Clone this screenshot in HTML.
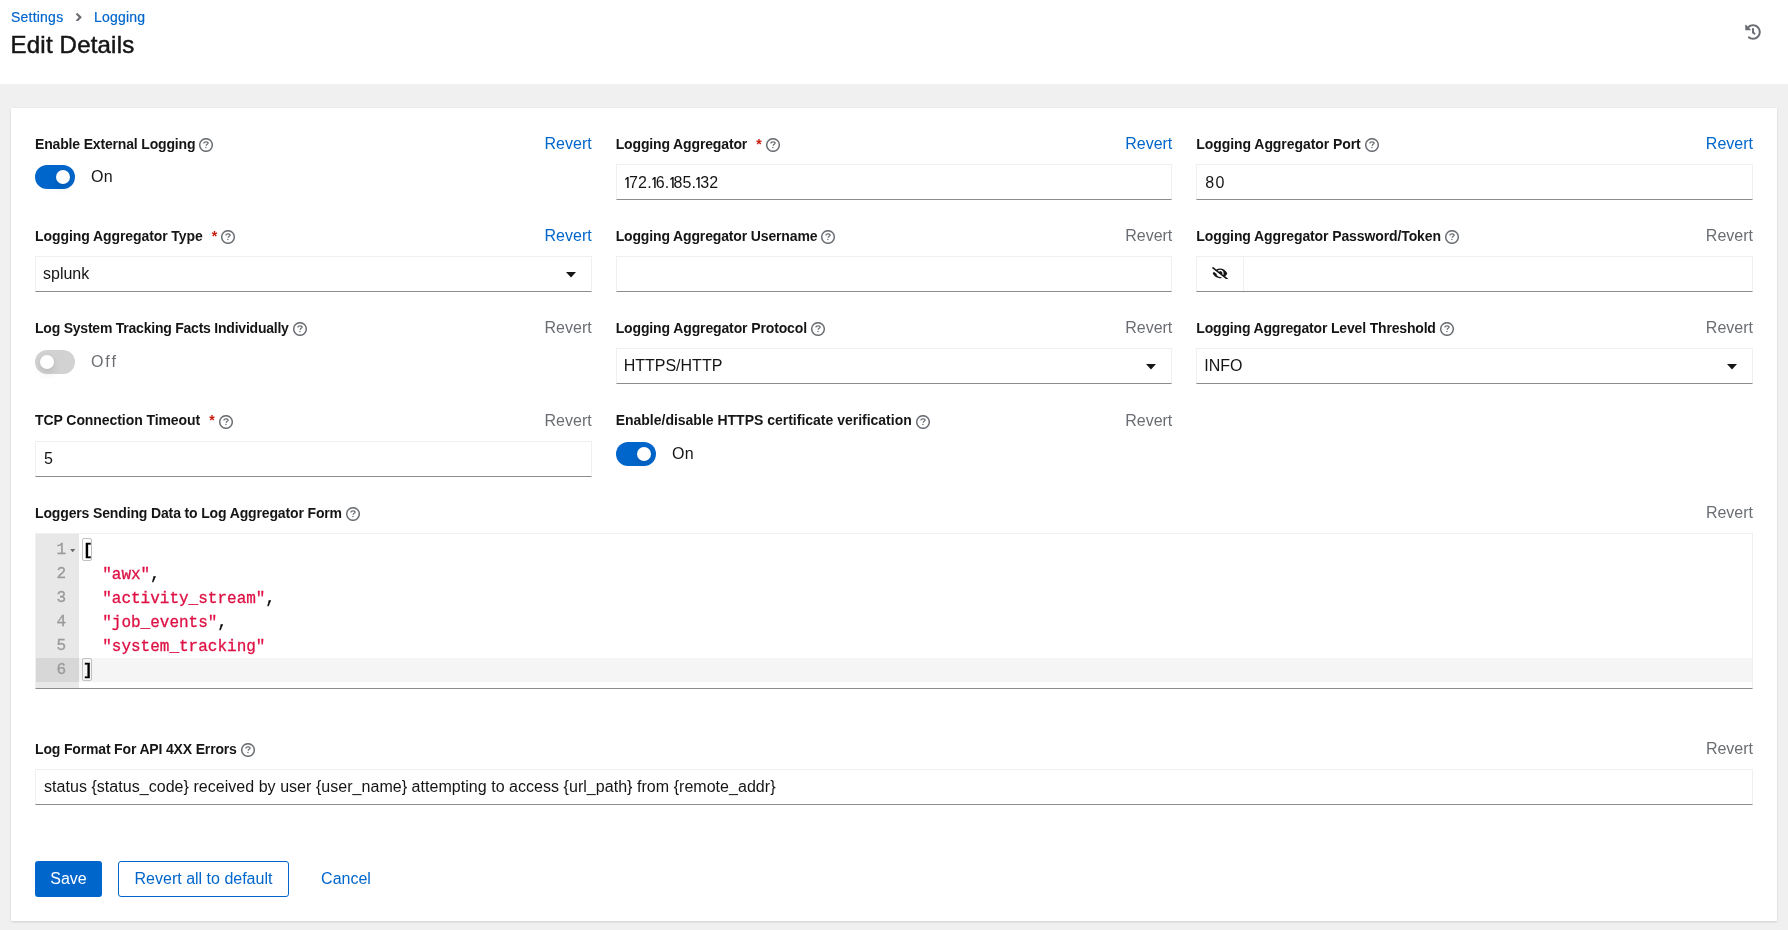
<!DOCTYPE html>
<html><head><meta charset="utf-8"><title>Edit Details</title><style>
*{box-sizing:border-box}
.wrap{position:absolute;left:0;top:0;width:1788px;height:930px;will-change:transform}
html,body{margin:0;padding:0}
body{width:1788px;height:930px;overflow:hidden;background:#f0f0f0;position:relative;font-family:"Liberation Sans",sans-serif;color:#151515;font-size:16px;line-height:24px}
.hdr{position:absolute;left:0;top:0;width:1788px;height:84px;background:#fff}
.bc{position:absolute;left:11px;top:7px;font-size:14px;line-height:21px;color:#06c;white-space:nowrap;letter-spacing:0.22px;-webkit-text-stroke:0.2px #06c}
.bc .chev{position:absolute;left:65.2px;top:5.6px;width:5.6px;height:8.6px}
.bc .l2{position:absolute;left:83px;top:0}
h1{position:absolute;left:10.6px;top:29px;margin:0;font-size:24px;line-height:31px;font-weight:400;white-space:nowrap;letter-spacing:0.2px;-webkit-text-stroke:0.5px #151515}
.hist{position:absolute;left:1745px;top:24px;width:16px;height:16px;fill:#6a6e73}
.card{position:absolute;left:11px;top:108px;width:1766px;height:813px;background:#fff;box-shadow:0 1px 2px 0 rgba(3,3,3,.12),0 0 2px 0 rgba(3,3,3,.06)}
.lbl{position:absolute;height:24px;white-space:nowrap;line-height:24px}
.lt{font-size:14px;font-weight:700;letter-spacing:-0.15px;vertical-align:top}
.req{color:#c9190b;font-size:14px;font-weight:700;margin-left:9px;vertical-align:top}
.help.hr{margin-left:4px}
.lbl.r4 .help{margin-top:7px}
.lbl.r4 .rv{top:1px}
.help{width:14px;height:14px;fill:#6a6e73;margin-left:4px;vertical-align:top;margin-top:6px}
.rv{position:absolute;right:0;top:0;color:#6a6e73;font-size:16px}
.rv.on{color:#06c}
.inp{position:absolute;height:36px;border:1px solid #f0f0f0;border-bottom-color:#8a8d90;padding:5px 8px;white-space:nowrap;background:#fff}
.ip{letter-spacing:0.15px}
.ip .one{width:4px;height:11.4px;vertical-align:baseline;margin-left:0.4px;fill:#151515}
.ip .dt{letter-spacing:-0.2px}
.caret{position:absolute;right:15px;top:15px;width:10px;height:5.5px;fill:#151515}
.pwb{position:absolute;left:0;top:-1px;width:47px;height:35px;border-right:1px solid #f0f0f0}
.eye{position:absolute;left:15px;top:10.6px;width:16px;height:12.8px;fill:#151515}
.sw{position:absolute;width:40px;height:24px;border-radius:24px;background:#d2d2d2}
.sw i{position:absolute;left:5px;top:5px;width:14px;height:14px;border-radius:50%;background:#fff;box-shadow:0 .25rem .5rem 0 rgba(3,3,3,.12),0 0 .25rem 0 rgba(3,3,3,.06)}
.sw.on{background:#06c}
.sw.on i{left:21px}
.swl{position:absolute;color:#6a6e73;line-height:24px;letter-spacing:1.9px}
.swl.on{color:#151515;letter-spacing:0.4px}
.ed{position:absolute;left:35px;top:533px;width:1718px;height:156px;border:1px solid #f0f0f0;border-bottom-color:#8a8d90;background:#fff;overflow:hidden}
.gut{position:absolute;left:-1px;top:-1px;width:44px;height:155px;background:#e8e8e8}
.gin{position:absolute;left:0;top:5px;width:44px}
.gl{height:24px;line-height:23px;padding-top:1px;text-align:right;padding-right:13px;font-family:"Liberation Mono",monospace;font-size:16px;color:#9a9a9a;-webkit-text-stroke:0.3px #9a9a9a}
.gl.act{background:rgba(0,0,0,.07)}
.fold{position:absolute;left:34.7px;top:15.7px;width:5.3px;height:3.4px;fill:#6a6e73}
.actl{position:absolute;left:43px;top:124px;right:0;height:24px;background:#f5f5f5}
.br{position:absolute;left:46px;width:10px;height:23px;border:1px solid #c0c0c0;border-radius:2px}
.code{position:absolute;left:47px;top:5px;font-family:"Liberation Mono",monospace;font-size:16px;white-space:pre;color:#000;-webkit-text-stroke:0.3px currentColor}
.cl{height:24px;line-height:24px}
.par{font-weight:700}
.str{color:#d14;-webkit-text-stroke:0.3px #d14}
.btn{position:absolute;top:861px;height:36px;border-radius:3px;font-size:16px;line-height:24px;padding:6px 0;text-align:center;white-space:nowrap}
.save{left:35px;width:67px;background:#06c;color:#fff}
.rad{left:118px;width:171px;border:1px solid #06c;color:#06c;padding:5px 0}
.cancel{left:306px;width:80px;color:#06c}
</style></head>
<body>
<div class="wrap">
<div class="hdr">
<div class="bc">Settings<svg class="chev" viewBox="25 96 206 320" preserveAspectRatio="none"><path d="M224.3 273l-136 136c-9.4 9.4-24.6 9.4-33.9 0l-22.6-22.6c-9.4-9.4-9.4-24.6 0-33.9l96.4-96.4-96.4-96.4c-9.4-9.4-9.4-24.6 0-33.9L54.3 103c9.4-9.4 24.6-9.4 33.9 0l136 136c9.5 9.4 9.5 24.6.1 34z" fill="#6a6e73"/></svg><span class="l2">Logging</span></div>
<h1>Edit Details</h1>
<svg class="hist" viewBox="0 0 512 512"><path d="M504 255.531c.253 136.64-111.18 248.372-247.82 248.468-59.015.042-113.223-20.53-155.822-54.911-11.077-8.94-11.905-25.541-1.839-35.607l11.267-11.267c8.609-8.609 22.353-9.551 31.891-1.984C173.062 425.135 212.781 440 256 440c101.705 0 184-82.311 184-184 0-101.705-82.311-184-184-184-48.814 0-93.149 18.969-126.068 49.932l50.754 50.754c10.08 10.08 2.941 27.314-11.313 27.314H24c-8.837 0-16-7.163-16-16V38.627c0-14.254 17.234-21.393 27.314-11.314l49.372 49.372C129.209 32.136 189.552 8 256 8c136.81 0 247.747 110.78 248 247.531zm-180.912 78.784l9.823-12.63c8.138-10.463 6.253-25.542-4.21-33.679L288 256.349V152c0-13.255-10.745-24-24-24h-16c-13.255 0-24 10.745-24 24v135.651l65.409 50.874c10.463 8.137 25.541 6.253 33.679-4.21z"/></svg>
</div>
<div class="card"></div>
<div class="lbl " style="left:35px;top:132px;width:556.67px"><span class="lt" style="letter-spacing:-0.166px">Enable External Logging</span><svg class="help" viewBox="0 0 14 14"><circle cx="7" cy="7" r="6.3" fill="none" stroke="#6a6e73" stroke-width="1.45"/><path d="M4.9 5.5C4.9 4.4 5.8 3.8 7 3.8C8.2 3.8 9.1 4.4 9.1 5.2C9.1 6.2 7.3 6.4 7.3 7.3V7.8" fill="none" stroke="#6a6e73" stroke-width="1.3"/><rect x="6.3" y="8.9" width="1.25" height="1.2" fill="#6a6e73"/></svg><span class="rv on">Revert</span></div><div class="sw on" style="left:35px;top:165px"><i></i></div><div class="swl on" style="left:91px;top:165px">On</div><div class="lbl " style="left:615.67px;top:132px;width:556.67px"><span class="lt" style="letter-spacing:-0.139px">Logging Aggregator</span><span class="req">*</span><svg class="help hr" viewBox="0 0 14 14"><circle cx="7" cy="7" r="6.3" fill="none" stroke="#6a6e73" stroke-width="1.45"/><path d="M4.9 5.5C4.9 4.4 5.8 3.8 7 3.8C8.2 3.8 9.1 4.4 9.1 5.2C9.1 6.2 7.3 6.4 7.3 7.3V7.8" fill="none" stroke="#6a6e73" stroke-width="1.3"/><rect x="6.3" y="8.9" width="1.25" height="1.2" fill="#6a6e73"/></svg><span class="rv on">Revert</span></div><div class="inp" style="left:615.67px;top:164px;width:556.67px;padding-top:6px;padding-bottom:0"><span class="ip"><svg class="one" viewBox="0 0 4 11.4"><path d="M2.15 0H3.65V11.4H2.15V2.1L0.3 3.3V1.65Z"/></svg>72<span class="dt">.</span><svg class="one" viewBox="0 0 4 11.4"><path d="M2.15 0H3.65V11.4H2.15V2.1L0.3 3.3V1.65Z"/></svg>6<span class="dt">.</span><svg class="one" viewBox="0 0 4 11.4"><path d="M2.15 0H3.65V11.4H2.15V2.1L0.3 3.3V1.65Z"/></svg>85<span class="dt">.</span><svg class="one" viewBox="0 0 4 11.4"><path d="M2.15 0H3.65V11.4H2.15V2.1L0.3 3.3V1.65Z"/></svg>32</span></div><div class="lbl " style="left:1196.33px;top:132px;width:556.67px"><span class="lt" style="letter-spacing:-0.070px">Logging Aggregator Port</span><svg class="help" viewBox="0 0 14 14"><circle cx="7" cy="7" r="6.3" fill="none" stroke="#6a6e73" stroke-width="1.45"/><path d="M4.9 5.5C4.9 4.4 5.8 3.8 7 3.8C8.2 3.8 9.1 4.4 9.1 5.2C9.1 6.2 7.3 6.4 7.3 7.3V7.8" fill="none" stroke="#6a6e73" stroke-width="1.3"/><rect x="6.3" y="8.9" width="1.25" height="1.2" fill="#6a6e73"/></svg><span class="rv on">Revert</span></div><div class="inp" style="left:1196.33px;top:164px;width:556.67px;padding-top:6px;padding-bottom:0"><span style="letter-spacing:1.2px">80</span></div><div class="lbl " style="left:35px;top:224px;width:556.67px"><span class="lt" style="letter-spacing:-0.081px">Logging Aggregator Type</span><span class="req">*</span><svg class="help hr" viewBox="0 0 14 14"><circle cx="7" cy="7" r="6.3" fill="none" stroke="#6a6e73" stroke-width="1.45"/><path d="M4.9 5.5C4.9 4.4 5.8 3.8 7 3.8C8.2 3.8 9.1 4.4 9.1 5.2C9.1 6.2 7.3 6.4 7.3 7.3V7.8" fill="none" stroke="#6a6e73" stroke-width="1.3"/><rect x="6.3" y="8.9" width="1.25" height="1.2" fill="#6a6e73"/></svg><span class="rv on">Revert</span></div><div class="inp" style="left:35px;top:256px;width:556.67px;padding-left:7px">splunk<svg class="caret" viewBox="0 0 10 5.5"><path d="M0 0H10L5 5.5Z"/></svg></div><div class="lbl " style="left:615.67px;top:224px;width:556.67px"><span class="lt" style="letter-spacing:-0.146px">Logging Aggregator Username</span><svg class="help" viewBox="0 0 14 14"><circle cx="7" cy="7" r="6.3" fill="none" stroke="#6a6e73" stroke-width="1.45"/><path d="M4.9 5.5C4.9 4.4 5.8 3.8 7 3.8C8.2 3.8 9.1 4.4 9.1 5.2C9.1 6.2 7.3 6.4 7.3 7.3V7.8" fill="none" stroke="#6a6e73" stroke-width="1.3"/><rect x="6.3" y="8.9" width="1.25" height="1.2" fill="#6a6e73"/></svg><span class="rv">Revert</span></div><div class="inp" style="left:615.67px;top:256px;width:556.67px"></div><div class="lbl " style="left:1196.33px;top:224px;width:556.67px"><span class="lt" style="letter-spacing:-0.108px">Logging Aggregator Password/Token</span><svg class="help" viewBox="0 0 14 14"><circle cx="7" cy="7" r="6.3" fill="none" stroke="#6a6e73" stroke-width="1.45"/><path d="M4.9 5.5C4.9 4.4 5.8 3.8 7 3.8C8.2 3.8 9.1 4.4 9.1 5.2C9.1 6.2 7.3 6.4 7.3 7.3V7.8" fill="none" stroke="#6a6e73" stroke-width="1.3"/><rect x="6.3" y="8.9" width="1.25" height="1.2" fill="#6a6e73"/></svg><span class="rv">Revert</span></div><div class="inp" style="left:1196.33px;top:256px;width:556.67px"><div class="pwb"><svg class="eye" viewBox="0 0 640 512"><path d="M320 400c-75.85 0-137.25-58.71-142.9-133.11L72.2 185.82c-13.79 17.3-26.48 35.590-36.72 55.59a32.350 32.350 0 0 0 0 29.190C89.71 376.41 197.07 448 320 448c26.91 0 52.87-4 77.89-10.46L346 397.39a144.13 144.13 0 0 1-26 2.61zm313.820 58.1l-110.55-85.44a331.250 331.250 0 0 0 81.25-102.07 32.350 32.350 0 0 0 0-29.190C550.29 135.59 442.93 64 320 64a308.150 308.150 0 0 0-147.32 37.7L45.46 3.37A16 16 0 0 0 23 6.18L3.37 31.45A16 16 0 0 0 6.18 53.9l588.36 454.73a16 16 0 0 0 22.46-2.810l19.64-25.270a16 16 0 0 0-2.820-22.450zm-183.72-142l-39.3-30.380A94.750 94.750 0 0 0 416 256a94.760 94.760 0 0 0-121.31-92.21A47.650 47.650 0 0 1 304 192a46.640 46.640 0 0 1-1.540 10l-73.61-56.890A142.310 142.310 0 0 1 320 112a143.920 143.920 0 0 1 144 144c0 21.630-5.290 41.790-13.900 60.110z"/></svg></div></div><div class="lbl " style="left:35px;top:316px;width:556.67px"><span class="lt" style="letter-spacing:-0.224px">Log System Tracking Facts Individually</span><svg class="help" viewBox="0 0 14 14"><circle cx="7" cy="7" r="6.3" fill="none" stroke="#6a6e73" stroke-width="1.45"/><path d="M4.9 5.5C4.9 4.4 5.8 3.8 7 3.8C8.2 3.8 9.1 4.4 9.1 5.2C9.1 6.2 7.3 6.4 7.3 7.3V7.8" fill="none" stroke="#6a6e73" stroke-width="1.3"/><rect x="6.3" y="8.9" width="1.25" height="1.2" fill="#6a6e73"/></svg><span class="rv">Revert</span></div><div class="sw" style="left:35px;top:350px"><i></i></div><div class="swl" style="left:91px;top:350px">Off</div><div class="lbl " style="left:615.67px;top:316px;width:556.67px"><span class="lt" style="letter-spacing:-0.126px">Logging Aggregator Protocol</span><svg class="help" viewBox="0 0 14 14"><circle cx="7" cy="7" r="6.3" fill="none" stroke="#6a6e73" stroke-width="1.45"/><path d="M4.9 5.5C4.9 4.4 5.8 3.8 7 3.8C8.2 3.8 9.1 4.4 9.1 5.2C9.1 6.2 7.3 6.4 7.3 7.3V7.8" fill="none" stroke="#6a6e73" stroke-width="1.3"/><rect x="6.3" y="8.9" width="1.25" height="1.2" fill="#6a6e73"/></svg><span class="rv">Revert</span></div><div class="inp" style="left:615.67px;top:348px;width:556.67px;padding-left:7px">HTTPS/HTTP<svg class="caret" viewBox="0 0 10 5.5"><path d="M0 0H10L5 5.5Z"/></svg></div><div class="lbl " style="left:1196.33px;top:316px;width:556.67px"><span class="lt" style="letter-spacing:-0.172px">Logging Aggregator Level Threshold</span><svg class="help" viewBox="0 0 14 14"><circle cx="7" cy="7" r="6.3" fill="none" stroke="#6a6e73" stroke-width="1.45"/><path d="M4.9 5.5C4.9 4.4 5.8 3.8 7 3.8C8.2 3.8 9.1 4.4 9.1 5.2C9.1 6.2 7.3 6.4 7.3 7.3V7.8" fill="none" stroke="#6a6e73" stroke-width="1.3"/><rect x="6.3" y="8.9" width="1.25" height="1.2" fill="#6a6e73"/></svg><span class="rv">Revert</span></div><div class="inp" style="left:1196.33px;top:348px;width:556.67px;padding-left:7px">INFO<svg class="caret" viewBox="0 0 10 5.5"><path d="M0 0H10L5 5.5Z"/></svg></div><div class="lbl r4" style="left:35px;top:408px;width:556.67px"><span class="lt" style="letter-spacing:-0.072px">TCP Connection Timeout</span><span class="req">*</span><svg class="help hr" viewBox="0 0 14 14"><circle cx="7" cy="7" r="6.3" fill="none" stroke="#6a6e73" stroke-width="1.45"/><path d="M4.9 5.5C4.9 4.4 5.8 3.8 7 3.8C8.2 3.8 9.1 4.4 9.1 5.2C9.1 6.2 7.3 6.4 7.3 7.3V7.8" fill="none" stroke="#6a6e73" stroke-width="1.3"/><rect x="6.3" y="8.9" width="1.25" height="1.2" fill="#6a6e73"/></svg><span class="rv">Revert</span></div><div class="inp" style="left:35px;top:441px;width:556.67px">5</div><div class="lbl r4" style="left:615.67px;top:408px;width:556.67px"><span class="lt" style="letter-spacing:-0.008px">Enable/disable HTTPS certificate verification</span><svg class="help" viewBox="0 0 14 14"><circle cx="7" cy="7" r="6.3" fill="none" stroke="#6a6e73" stroke-width="1.45"/><path d="M4.9 5.5C4.9 4.4 5.8 3.8 7 3.8C8.2 3.8 9.1 4.4 9.1 5.2C9.1 6.2 7.3 6.4 7.3 7.3V7.8" fill="none" stroke="#6a6e73" stroke-width="1.3"/><rect x="6.3" y="8.9" width="1.25" height="1.2" fill="#6a6e73"/></svg><span class="rv">Revert</span></div><div class="sw on" style="left:616px;top:442px"><i></i></div><div class="swl on" style="left:672px;top:442px">On</div><div class="lbl " style="left:35px;top:501px;width:1718px"><span class="lt" style="letter-spacing:-0.140px">Loggers Sending Data to Log Aggregator Form</span><svg class="help" viewBox="0 0 14 14"><circle cx="7" cy="7" r="6.3" fill="none" stroke="#6a6e73" stroke-width="1.45"/><path d="M4.9 5.5C4.9 4.4 5.8 3.8 7 3.8C8.2 3.8 9.1 4.4 9.1 5.2C9.1 6.2 7.3 6.4 7.3 7.3V7.8" fill="none" stroke="#6a6e73" stroke-width="1.3"/><rect x="6.3" y="8.9" width="1.25" height="1.2" fill="#6a6e73"/></svg><span class="rv">Revert</span></div><div class="ed">
<div class="gut"><div class="gin"><div class="gl">1</div><div class="gl">2</div><div class="gl">3</div><div class="gl">4</div><div class="gl">5</div><div class="gl act">6</div></div><svg class="fold" viewBox="0 0 6 4"><path d="M0 0H6L3 4Z"/></svg></div>
<div class="actl"></div>
<div class="br" style="top:4px"></div><div class="br" style="top:124px"></div>
<div class="code"><div class="cl"><b class="par">[</b></div><div class="cl">  <span class="str">"awx"</span>,</div><div class="cl">  <span class="str">"activity_stream"</span>,</div><div class="cl">  <span class="str">"job_events"</span>,</div><div class="cl">  <span class="str">"system_tracking"</span></div><div class="cl"><b class="par">]</b></div></div>
</div><div class="lbl " style="left:35px;top:737px;width:1718px"><span class="lt" style="letter-spacing:-0.161px">Log Format For API 4XX Errors</span><svg class="help" viewBox="0 0 14 14"><circle cx="7" cy="7" r="6.3" fill="none" stroke="#6a6e73" stroke-width="1.45"/><path d="M4.9 5.5C4.9 4.4 5.8 3.8 7 3.8C8.2 3.8 9.1 4.4 9.1 5.2C9.1 6.2 7.3 6.4 7.3 7.3V7.8" fill="none" stroke="#6a6e73" stroke-width="1.3"/><rect x="6.3" y="8.9" width="1.25" height="1.2" fill="#6a6e73"/></svg><span class="rv">Revert</span></div><div class="inp" style="left:35px;top:769px;width:1718px"><span style="letter-spacing:0.04px">status {status_code} received by user {user_name} attempting to access {url_path} from {remote_addr}</span></div>
<div class="btn save">Save</div>
<div class="btn rad">Revert all to default</div>
<div class="btn cancel">Cancel</div>
</div>
</body></html>
